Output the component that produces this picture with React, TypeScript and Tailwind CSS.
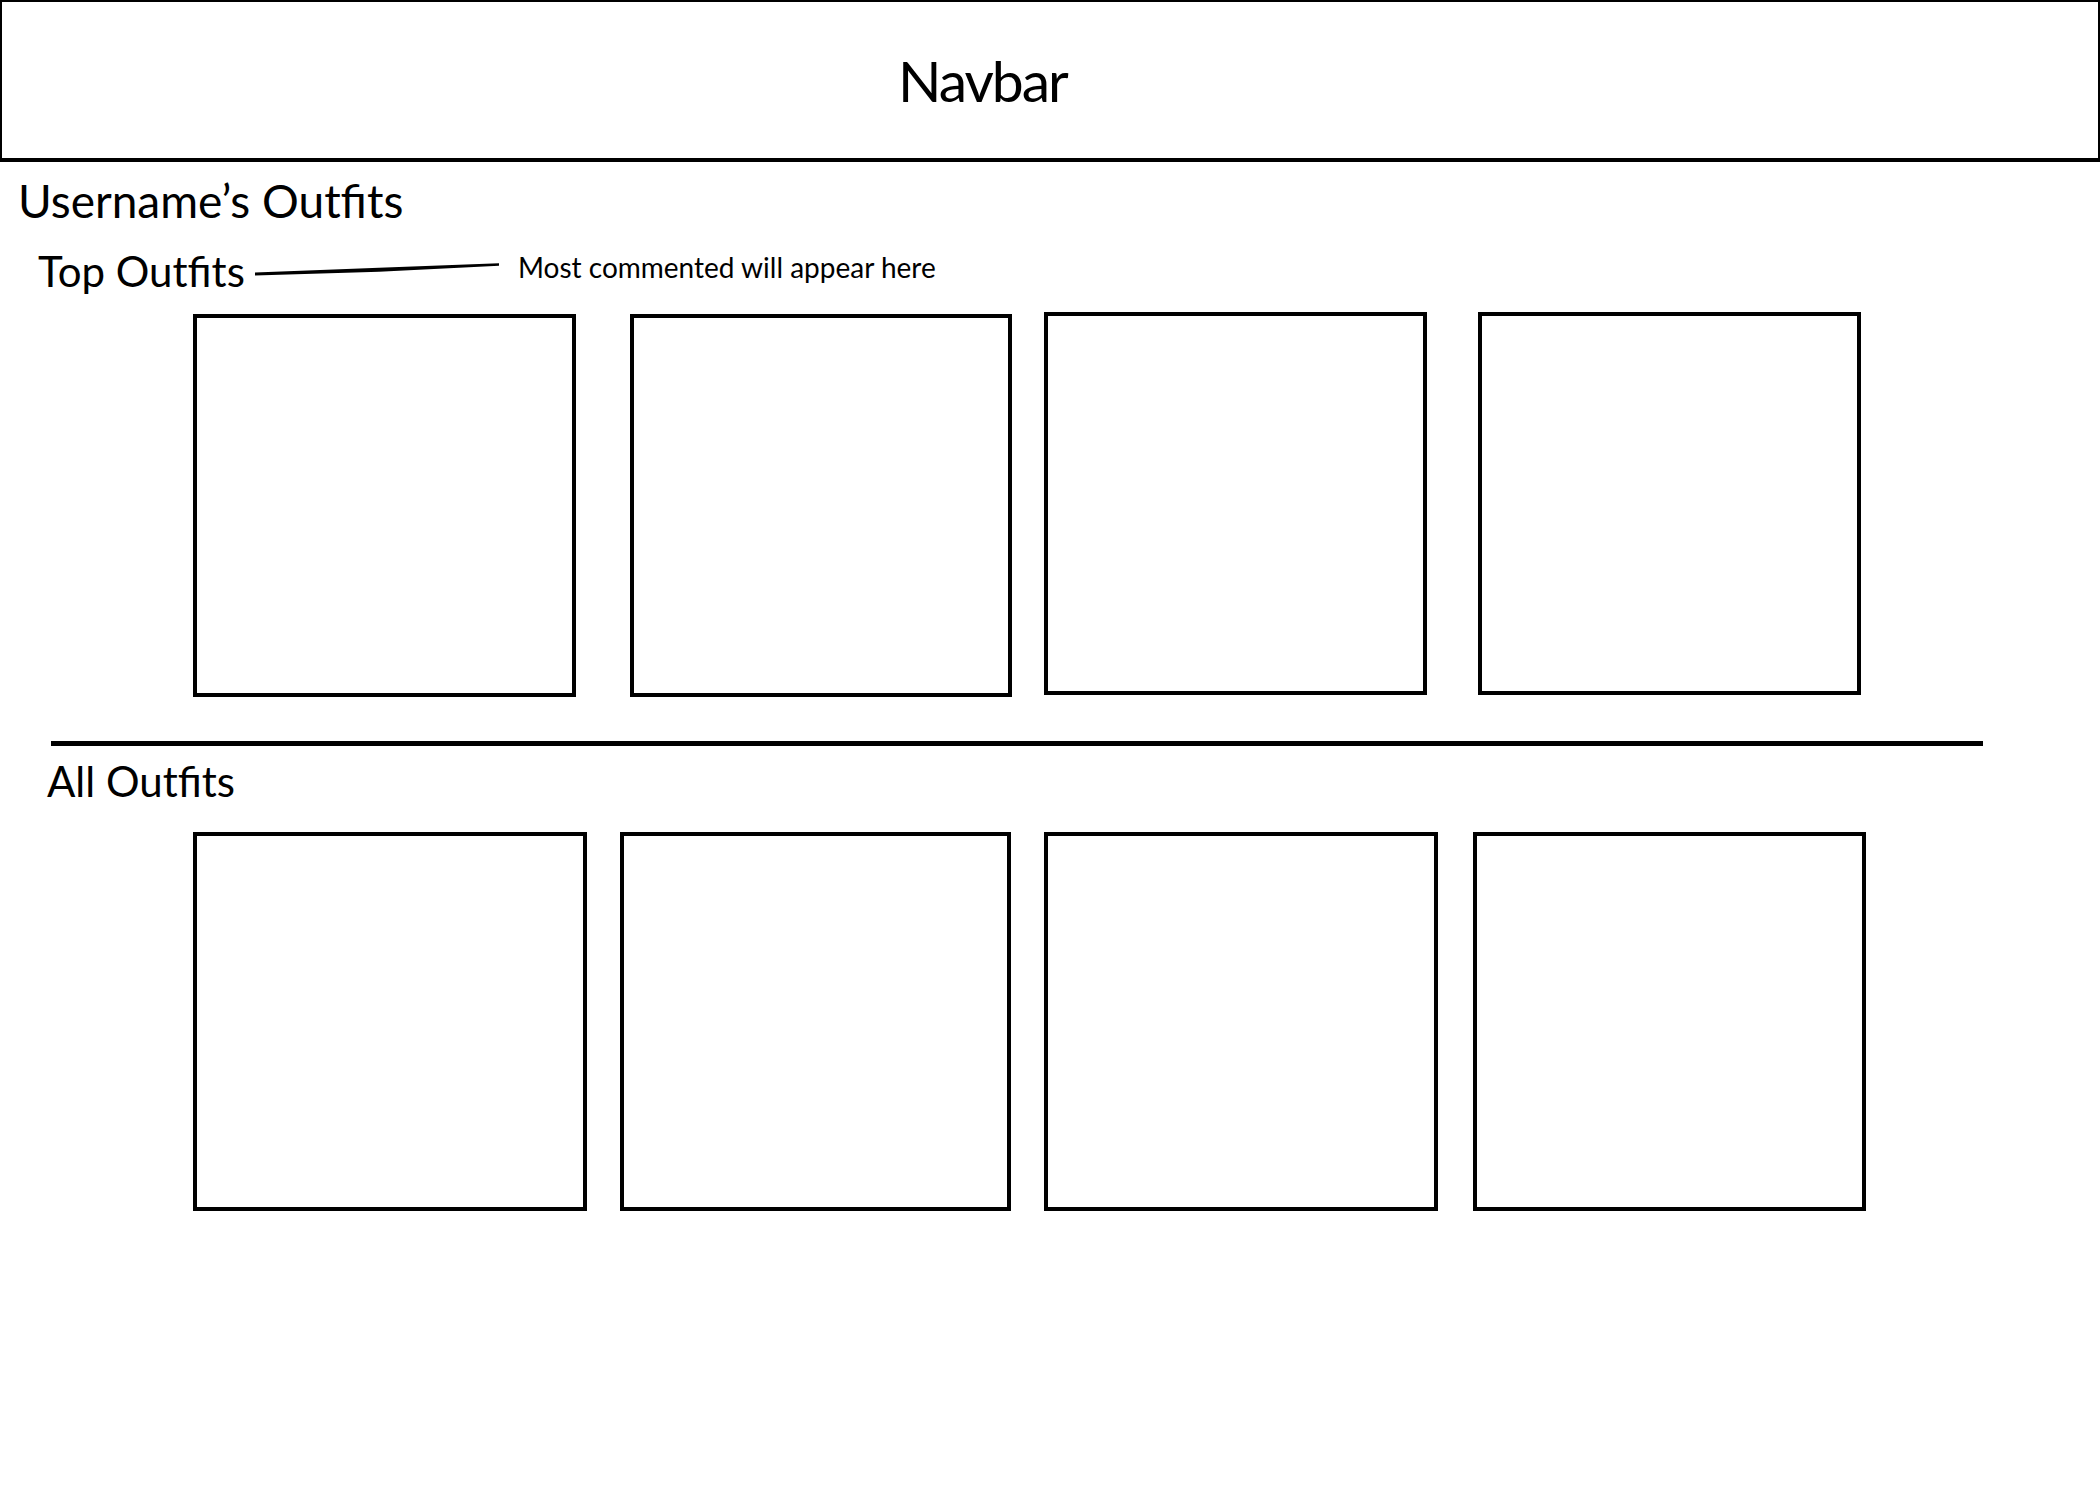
const topOutfits = [
  { id: 1, className: "w-[383px] h-[383px] mt-[2px]" },
  { id: 2, className: "w-[382px] h-[383px] mt-[2px] ml-[54px]" },
  { id: 3, className: "w-[383px] h-[383px] ml-[32px]" },
  { id: 4, className: "w-[383px] h-[383px] ml-[51px]" },
];

const allOutfits = [
  { id: 1, className: "w-[394px] h-[379px]" },
  { id: 2, className: "w-[391px] h-[379px] ml-[33px]" },
  { id: 3, className: "w-[394px] h-[379px] ml-[33px]" },
  { id: 4, className: "w-[393px] h-[379px] ml-[35px]" },
];

function OutfitBox({ className }: { className: string }) {
  return <div className={`shrink-0 border-4 border-black bg-white ${className}`} />;
}

export default function App() {
  return (
    <div className="w-[2100px] h-[1500px] bg-white text-black font-['Lato',sans-serif]">
      <nav className="h-[162px] flex items-center pl-[896px] border-2 border-b-4 border-black">
        <span className="text-[57px] leading-none tracking-[-2px]">Navbar</span>
      </nav>

      <h1 className="mt-[16px] pl-[18px] text-[46px] leading-none font-normal">
        Username’s Outfits
      </h1>

      <div className="mt-[24px] h-[44px] pl-[38px] flex items-start">
        <h2 className="mt-[2px] w-[216px] shrink-0 whitespace-nowrap text-[42px] leading-none font-normal">
          Top Outfits
        </h2>
        {/* pointer line to the note */}
        <svg className="mt-[13px] shrink-0" width="246" height="16" viewBox="0 0 246 16">
          <path d="M1 11.4 L125 6.8 L245 2.2 L245 4.8 L125 10.8 L1 14.6 Z" fill="black" />
        </svg>
        <p className="mt-[5px] ml-[18px] whitespace-nowrap text-[28px] leading-none">
          Most commented will appear here
        </p>
      </div>

      <div className="mt-[20px] pl-[193px] flex items-start">
        {topOutfits.map((o) => (
          <OutfitBox key={o.id} className={o.className} />
        ))}
      </div>

      <div className="mt-[44px] ml-[51px] w-[1932px] h-[5px] bg-black" />

      <h2 className="mt-[14px] pl-[47px] text-[42px] leading-none font-normal">All Outfits</h2>

      <div className="mt-[30px] pl-[193px] flex items-start">
        {allOutfits.map((o) => (
          <OutfitBox key={o.id} className={o.className} />
        ))}
      </div>
    </div>
  );
}
